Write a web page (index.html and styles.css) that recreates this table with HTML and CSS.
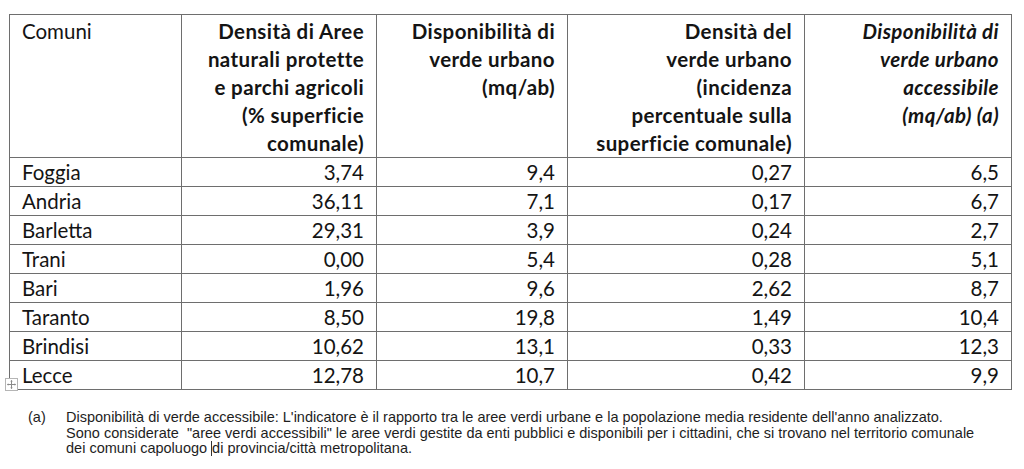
FILE: index.html
```html
<!DOCTYPE html>
<html lang="it">
<head>
<meta charset="utf-8">
<title>Verde urbano</title>
<link rel="stylesheet" href="styles.css">
</head>
<body>
<div class="page">
  <div class="table-wrap">
    <table class="data">
      <colgroup>
        <col class="c1"><col class="c2"><col class="c3"><col class="c4"><col class="c5">
      </colgroup>
      <thead>
        <tr>
          <th class="name">Comuni</th>
          <th class="bold">Densità di Aree<br>naturali protette<br>e parchi agricoli<br>(% superficie<br>comunale)</th>
          <th class="bold">Disponibilità di<br>verde urbano<br>(mq/ab)</th>
          <th class="bold">Densità del<br>verde urbano<br>(incidenza<br>percentuale sulla<br>superficie comunale)</th>
          <th class="bold it">Disponibilità di<br>verde urbano<br>accessibile<br>(mq/ab) (a)</th>
        </tr>
      </thead>
      <tbody>
        <tr><td class="name">Foggia</td><td>3,74</td><td>9,4</td><td>0,27</td><td>6,5</td></tr>
        <tr><td class="name">Andria</td><td>36,11</td><td>7,1</td><td>0,17</td><td>6,7</td></tr>
        <tr><td class="name">Barletta</td><td>29,31</td><td>3,9</td><td>0,24</td><td>2,7</td></tr>
        <tr><td class="name">Trani</td><td>0,00</td><td>5,4</td><td>0,28</td><td>5,1</td></tr>
        <tr><td class="name">Bari</td><td>1,96</td><td>9,6</td><td>2,62</td><td>8,7</td></tr>
        <tr><td class="name">Taranto</td><td>8,50</td><td>19,8</td><td>1,49</td><td>10,4</td></tr>
        <tr><td class="name">Brindisi</td><td>10,62</td><td>13,1</td><td>0,33</td><td>12,3</td></tr>
        <tr><td class="name">Lecce</td><td>12,78</td><td>10,7</td><td>0,42</td><td>9,9</td></tr>
      </tbody>
    </table>
    <span class="move-handle" aria-hidden="true">
      <svg width="13" height="13" viewBox="0 0 13 13">
        <rect x="0.5" y="0.5" width="12" height="12" fill="#fff" stroke="#b5b5b5"/>
        <path d="M6.5 2.5v8M2.5 6.5h8" stroke="#8a8a8a" stroke-width="1" fill="none"/>
        <path d="M6.5 2l-1.3 1.4h2.6zM6.5 11l-1.3-1.4h2.6zM2 6.5l1.4-1.3v2.6zM11 6.5l-1.4-1.3v2.6z" fill="#8a8a8a"/>
      </svg>
    </span>
  </div>
  <div class="note">
    <span class="note-label">(a)</span>
    <p class="note-text">Disponibilità di verde accessibile: L'indicatore è il rapporto tra le aree verdi urbane e la popolazione media residente dell'anno analizzato.<br>Sono considerate&nbsp; "aree verdi accessibili" le aree verdi gestite da enti pubblici e disponibili per i cittadini, che si trovano nel territorio comunale<br>dei comuni capoluogo <span class="caret"></span>di provincia/città metropolitana.</p>
  </div>
</div>
</body>
</html>
```

FILE: styles.css
```css
html, body {
  margin: 0;
  padding: 0;
  background: #ffffff;
}

.page {
  padding: 14px 0 0 9px;
  color: #141414;
}

.table-wrap {
  position: relative;
  width: 1003px;
}

.data {
  border-collapse: collapse;
  table-layout: fixed;
  width: 1003px;
  font-family: Lato, "Open Sans", sans-serif;
  font-size: 20.5px;
  color: #141414;
}

.c1 { width: 172px; }
.c2 { width: 195px; }
.c3 { width: 191px; }
.c4 { width: 237px; }
.c5 { width: 207px; }

.data th,
.data td {
  border: 1px solid #6e6e6e;
  padding: 0 12px;
  line-height: 28px;
  white-space: nowrap;
  text-align: right;
}

.data th {
  vertical-align: top;
  padding-top: 2px;
  padding-bottom: 0;
  font-weight: normal;
}

.data th.bold {
  font-weight: bold;
  letter-spacing: 0.4px;
}

.data th.it { font-style: italic; }

.data .name { text-align: left; }

.data td {
  height: 28px;
}

.move-handle {
  position: absolute;
  left: -4px;
  bottom: -1px;
  width: 13px;
  height: 13px;
  display: block;
}

.move-handle svg { display: block; }

.note {
  display: flex;
  padding: 20px 0 0 19px;
  font-family: "Liberation Sans", Arial, sans-serif;
  font-size: 14.5px;
  line-height: 15.5px;
  color: #1e1e1e;
}

.note-label {
  width: 38px;
  flex: none;
}

.note-text {
  margin: 0;
  white-space: nowrap;
}

.caret {
  display: inline-block;
  width: 1px;
  height: 15px;
  background: #333;
  vertical-align: -3px;
}
```
